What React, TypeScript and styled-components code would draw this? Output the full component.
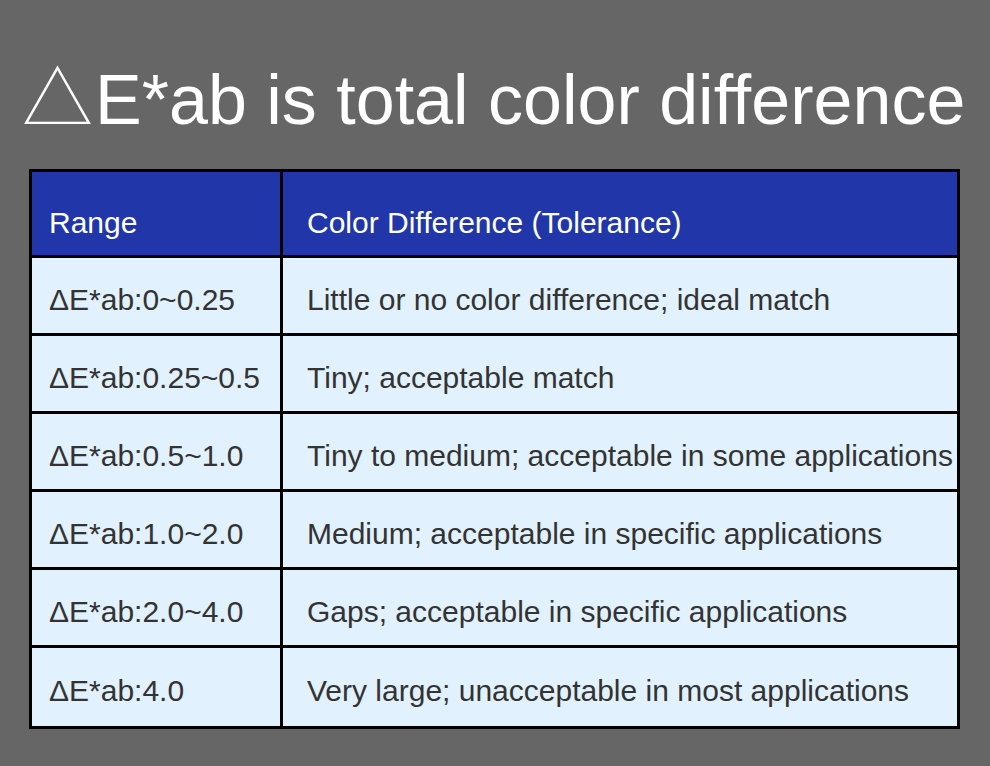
import React, { FC } from 'react';
import styled, { createGlobalStyle } from 'styled-components';

const GlobalStyle = createGlobalStyle`
    html, body {
        margin: 0;
        padding: 0;
        background: #666666;
    }
    body {
        font-family: "Liberation Sans", Arial, sans-serif;
    }
`;

const Page = styled.div`
    width: 990px;
    height: 766px;
    background: #666666;
    padding: 53px 0 0 29px;
    box-sizing: border-box;
`;

const Title = styled.h1`
    margin: 0 0 0 -7px;
    height: 116px;
    color: #ffffff;
    font-weight: normal;
    font-size: 70px;
    line-height: 80px;
    white-space: nowrap;
`;

const Triangle = styled.span`
    font-family: "Noto Sans CJK JP", "DejaVu Sans", sans-serif;
    font-weight: 300;
    font-size: 71px;
    line-height: 80px;
    margin-right: 2px;
`;

const Table = styled.table`
    width: 931px;
    border-collapse: collapse;
    border: 3px solid #000000;
    font-size: 30px;
`;

const HeadCell = styled.th<{ $indent: number; $width?: number }>`
    height: 86px;
    background: #2136a9;
    color: #ffffff;
    font-weight: normal;
    text-align: left;
    vertical-align: middle;
    padding: 18px 0 0 ${p => p.$indent}px;
    box-sizing: border-box;
    border: 3px solid #000000;
    width: ${p => (p.$width ? `${p.$width}px` : 'auto')};
`;

const Row = styled.tr`
    &:last-child td {
        height: 81px;
    }
`;

const Cell = styled.td<{ $indent: number }>`
    height: 78px;
    background: #e1f1fe;
    color: #333333;
    text-align: left;
    vertical-align: middle;
    padding: 8px 0 0 ${p => p.$indent}px;
    box-sizing: border-box;
    border: 3px solid #000000;
    white-space: nowrap;
`;

const rows: [string, string][] = [
    ['ΔE*ab:0~0.25', 'Little or no color difference; ideal match'],
    ['ΔE*ab:0.25~0.5', 'Tiny; acceptable match'],
    ['ΔE*ab:0.5~1.0', 'Tiny to medium; acceptable in some applications'],
    ['ΔE*ab:1.0~2.0', 'Medium; acceptable in specific applications'],
    ['ΔE*ab:2.0~4.0', 'Gaps; acceptable in specific applications'],
    ['ΔE*ab:4.0', 'Very large; unacceptable in most applications'],
];

const App: FC = () => {
    return (
        <Page>
            <GlobalStyle />
            <Title>
                <Triangle>△</Triangle>E*ab is total color difference
            </Title>
            <Table>
                <thead>
                    <tr>
                        <HeadCell $indent={17} $width={251}>Range</HeadCell>
                        <HeadCell $indent={24}>Color Difference (Tolerance)</HeadCell>
                    </tr>
                </thead>
                <tbody>
                    {rows.map(([range, desc]) => (
                        <Row key={range}>
                            <Cell $indent={17}>{range}</Cell>
                            <Cell $indent={24}>{desc}</Cell>
                        </Row>
                    ))}
                </tbody>
            </Table>
        </Page>
    );
};

export default App;
